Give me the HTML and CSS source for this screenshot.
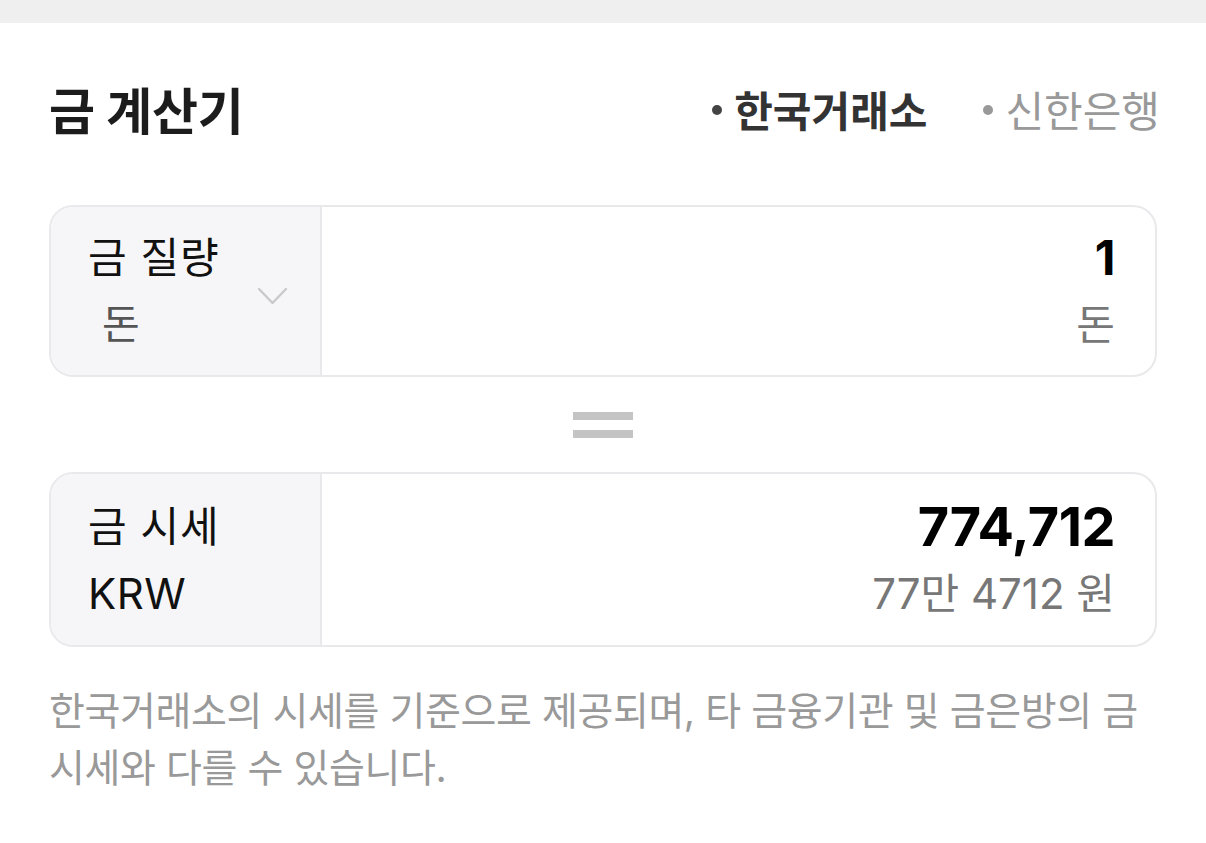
FILE: index.html
```html
<!DOCTYPE html>
<html lang="ko">
<head>
<meta charset="utf-8">
<link rel="stylesheet" href="styles.css">
</head>
<body>
<div class="topbar"></div>
<main class="wrap">
  <header class="head">
    <h1 class="title">금 계산기</h1>
    <nav class="tabs">
      <span class="tab active"><i class="dot"></i>한국거래소</span>
      <span class="tab"><i class="dot"></i>신한은행</span>
    </nav>
  </header>

  <section class="card card-weight">
    <div class="side">
      <div class="side-text">
        <div class="side-main">금 질량</div>
        <div class="side-sub">돈</div>
      </div>
      <svg class="chev" width="31" height="21" viewBox="0 0 31 21"><path d="M2 3 L15.5 17 L29 3" fill="none" stroke="#c9c9cc" stroke-width="2.4" stroke-linecap="round" stroke-linejoin="round"/></svg>
    </div>
    <div class="value">
      <div class="big big-input">1</div>
      <div class="unit">돈</div>
    </div>
  </section>

  <div class="equals"><span></span><span></span></div>

  <section class="card card-price">
    <div class="side">
      <div class="side-text">
        <div class="side-main">금 시세</div>
        <div class="side-main latin">KRW</div>
      </div>
    </div>
    <div class="value">
      <div class="big">774,712</div>
      <div class="unit">77만 4712 원</div>
    </div>
  </section>

  <p class="note">한국거래소의 시세를 기준으로 제공되며, 타 금융기관 및 금은방의 금 시세와 다를 수 있습니다.</p>
</main>
</body>
</html>
```

FILE: styles.css
```css
* { box-sizing: border-box; }
html, body { margin: 0; padding: 0; background: #fff; }
body {
  font-family: "Inter", "Noto Sans CJK KR", sans-serif;
  color: #111;
}
.topbar { height: 23px; background: #efefef; }
.wrap { padding: 0 49px; }
.head {
  display: flex;
  align-items: center;
  justify-content: space-between;
  height: 182px;
  padding-bottom: 12px;
}
.title {
  margin: 0;
  font-size: 50px;
  font-weight: 700;
  color: #1c1c1c;
  letter-spacing: -0.3px;
}
.tabs { display: flex; gap: 56px; margin-right: -3px; }
.tab {
  display: flex;
  align-items: center;
  font-size: 42px;
  color: #999;
  font-weight: 400;
}
.tab.active { color: #333; font-weight: 700; }
.dot {
  width: 10px; height: 10px; border-radius: 50%;
  background: currentColor; margin-right: 12px; margin-top: 4px;
}
.tab.active .dot { background: #444; }
.card {
  display: flex;
  border: 2px solid #e9e9ec;
  border-radius: 24px;
  overflow: hidden;
}
.card-weight { height: 172px; }
.card-price { height: 175px; }
.side {
  width: 271px;
  background: #f6f6f8;
  border-right: 2px solid #e9e9ec;
  display: flex;
  align-items: center;
  justify-content: space-between;
  padding: 0 32px 0 37px;
}
.side-main { font-size: 42px; color: #111; line-height: 67px; letter-spacing: 1px; }
.side-main.latin { letter-spacing: 0.5px; }
.side-sub { font-size: 41px; color: #555; line-height: 67px; padding-left: 14px; }
.chev { margin-top: 10px; }
.value {
  flex: 1;
  display: flex;
  flex-direction: column;
  justify-content: center;
  align-items: flex-end;
  padding-right: 40px;
}
.big { font-size: 54px; font-weight: 700; color: #000; line-height: 67px; letter-spacing: -0.5px; }
.big-input { font-size: 48px; }
.unit { font-size: 42px; color: #777; line-height: 67px; }
.equals {
  height: 95px;
  display: flex;
  flex-direction: column;
  align-items: center;
  justify-content: center;
  gap: 10px;
}
.equals span { width: 60px; height: 8px; background: #c4c4c4; }
.note {
  margin: 35px 0 0;
  font-size: 39px;
  line-height: 57px;
  color: #999;
  letter-spacing: -0.4px;
}
```
